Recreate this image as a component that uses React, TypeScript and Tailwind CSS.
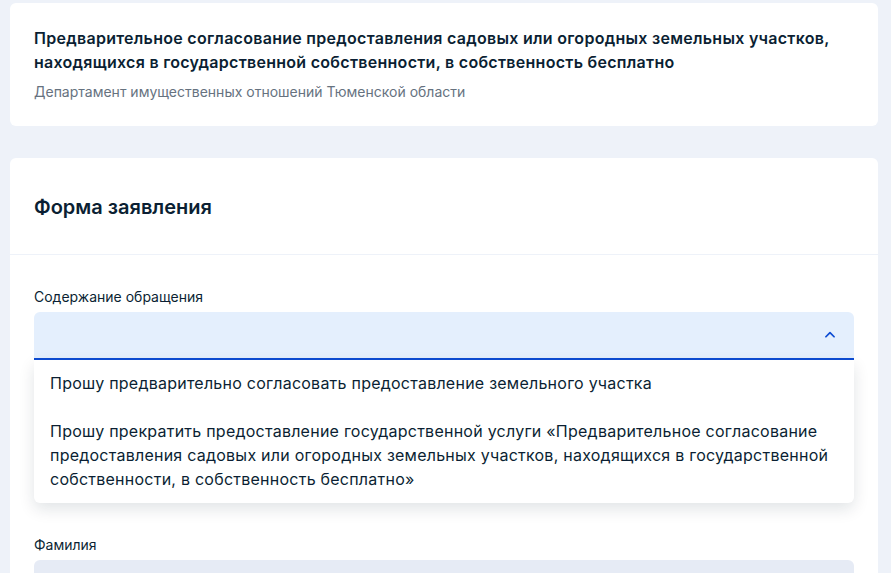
import React from "react";

export default function App() {
  return (
    <div
      className="min-h-screen bg-[#eef2f9] pt-[3px] pl-[10px] pr-[13px] pb-10"
      style={{ fontFamily: "Inter, 'Noto Sans', sans-serif" }}
    >
      <div className="bg-white rounded-[6px] px-6 pt-[23px] pb-6">
        <h1 className="text-[16px] leading-6 font-semibold tracking-[0.28px] text-[#0b1f33]">
          Предварительное согласование предоставления садовых или огородных земельных участков, находящихся в государственной собственности, в собственность бесплатно
        </h1>
        <p className="mt-2 text-[14px] leading-5 text-[#66727f]">
          Департамент имущественных отношений Тюменской области
        </p>
      </div>

      <div className="mt-8 bg-white rounded-[6px]">
        <div className="px-6 pt-[35px] pb-[33px] border-b border-[#eef2f9]">
          <h2 className="text-[20px] leading-7 font-semibold text-[#0b1f33]">Форма заявления</h2>
        </div>
        <div className="px-6 pt-8">
          <label className="block text-[14px] leading-5 text-[#0b1f33]">Содержание обращения</label>
          <div className="relative mt-[5px]">
            <div className="h-12 bg-[#e4effd] rounded-t-[6px] border-b-2 border-[#0d4cd3] flex items-center justify-end pr-[17px]">
              <svg width="14" height="14" viewBox="0 0 24 24" fill="none" stroke="#0d4cd3" strokeWidth="3" strokeLinecap="round" strokeLinejoin="round">
                <path d="M5 15l7-7 7 7" />
              </svg>
            </div>
            <div className="absolute left-0 right-0 top-full z-10 bg-white rounded-b-[6px] shadow-[0_6px_16px_rgba(11,31,51,0.12)]">
              <div className="px-4 pt-[11px] pb-3 text-[16px] leading-6 tracking-[0.24px] text-[#0b1f33]">
                Прошу предварительно согласовать предоставление земельного участка
              </div>
              <div className="px-4 py-3 text-[16px] leading-6 tracking-[0.24px] text-[#0b1f33]">
                Прошу прекратить предоставление государственной услуги «Предварительное согласование предоставления садовых или огородных земельных участков, находящихся в государственной собственности, в собственность бесплатно»
              </div>
            </div>
          </div>
          <div className="h-[175px]" />
          <label className="block text-[14px] leading-5 text-[#0b1f33]">Фамилия</label>
          <div className="mt-[5px] h-12 bg-[#e6ebf5] rounded-t-[6px]" />
          <div className="h-10" />
        </div>
      </div>
    </div>
  );
}
